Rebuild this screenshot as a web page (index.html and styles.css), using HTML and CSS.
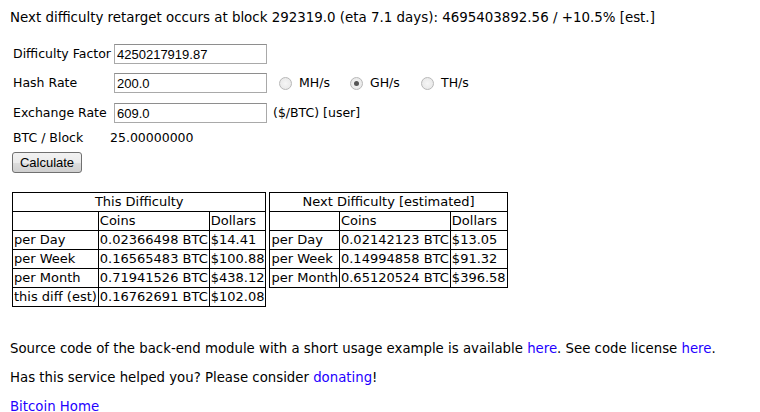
FILE: index.html
```html
<!DOCTYPE html>
<html>
<head>
<meta charset="utf-8">
<link rel="stylesheet" href="styles.css">
</head>
<body>
<p class="retarget">Next difficulty retarget occurs at block 292319.0 (eta 7.1 days): 4695403892.56 / +10.5% [est.]</p>

<form class="calc">
  <div class="row r1">
    <label class="lbl">Difficulty Factor</label>
    <input class="field" type="text" value="4250217919.87">
  </div>
  <div class="row r2">
    <label class="lbl">Hash Rate</label>
    <input class="field" type="text" value="200.0">
    <span class="units">
      <span class="opt"><span class="radio"></span><span class="unit">MH/s</span></span>
      <span class="opt"><span class="radio checked"></span><span class="unit">GH/s</span></span>
      <span class="opt"><span class="radio"></span><span class="unit">TH/s</span></span>
    </span>
  </div>
  <div class="row r3">
    <label class="lbl">Exchange Rate</label>
    <input class="field" type="text" value="609.0">
    <span class="note">($/BTC) [user]</span>
  </div>
  <div class="row r4">
    <span class="lbl">BTC / Block</span>
    <span class="val">25.00000000</span>
  </div>
  <div class="row r5">
    <button class="btn" type="button">Calculate</button>
  </div>
</form>

<div class="results">
  <table class="res">
    <tr><th colspan="3">This Difficulty</th></tr>
    <tr><td></td><td>Coins</td><td>Dollars</td></tr>
    <tr><td>per Day</td><td>0.02366498 BTC</td><td>$14.41</td></tr>
    <tr><td>per Week</td><td>0.16565483 BTC</td><td>$100.88</td></tr>
    <tr><td>per Month</td><td>0.71941526 BTC</td><td>$438.12</td></tr>
    <tr><td>this diff (est)</td><td>0.16762691 BTC</td><td>$102.08</td></tr>
  </table>
  <table class="res">
    <tr><th colspan="3">Next Difficulty [estimated]</th></tr>
    <tr><td></td><td>Coins</td><td>Dollars</td></tr>
    <tr><td>per Day</td><td>0.02142123 BTC</td><td>$13.05</td></tr>
    <tr><td>per Week</td><td>0.14994858 BTC</td><td>$91.32</td></tr>
    <tr><td>per Month</td><td>0.65120524 BTC</td><td>$396.58</td></tr>
  </table>
</div>

<p class="info">Source code of the back-end module with a short usage example is available <a href="#">here</a>. See code license <a href="#">here</a>.</p>
<p class="info">Has this service helped you? Please consider <a href="#">donating</a>!</p>
<p class="info last"><a href="#">Bitcoin Home</a></p>
</body>
</html>
```

FILE: styles.css
```css
html, body {
  background: #fff;
}
body {
  margin: 10px 10px 0;
  font-family: "DejaVu Sans", Verdana, sans-serif;
  font-size: 13px;
  line-height: 16px;
  color: #000;
}
p {
  margin: 13px 0;
}
.retarget {
  margin-top: 0;
  font-size: 13.4px;
}
a {
  color: #2400ff;
  text-decoration: none;
}
.calc {
  display: flex;
  flex-direction: column;
  align-items: flex-start;
  padding-left: 3px;
  margin-top: 18px;
  font-size: 12.5px;
}
.row {
  display: flex;
  align-items: center;
}
.r2 { margin-top: 9px; }
.r3 { margin-top: 10px; }
.r4 { margin-top: 7px; height: 16px; }
.r5 { margin-top: 6px; }
.lbl {
  width: 101px;
  white-space: nowrap;
}
.field {
  box-sizing: border-box;
  width: 153px;
  height: 20px;
  margin: 0;
  padding: 0 2px;
  border: 1px solid #a9a9a9;
  border-top-color: #8e8e8e;
  font-family: "Liberation Sans", Arial, sans-serif;
  font-size: 13px;
  color: #000;
}
.units {
  display: flex;
  align-items: center;
  padding-left: 12px;
}
.opt {
  display: flex;
  align-items: center;
  width: 71px;
}
.radio {
  box-sizing: border-box;
  width: 13px;
  height: 13px;
  border-radius: 50%;
  border: 1px solid #b8b8b8;
  background: radial-gradient(circle, #f6f6f6 0%, #e4e4e4 100%);
  display: flex;
  align-items: center;
  justify-content: center;
}
.radio.checked::after {
  content: "";
  width: 5px;
  height: 5px;
  border-radius: 50%;
  background: #555;
}
.unit {
  margin-left: 7px;
}
.note {
  padding-left: 6px;
}
.val {
  margin-left: -4px;
}
.btn {
  box-sizing: border-box;
  width: 70px;
  height: 21px;
  margin-left: -1px;
  padding: 0;
  border: 1px solid #707070;
  border-radius: 3px;
  background: linear-gradient(#f2f2f2 0%, #ebebeb 50%, #dddddd 51%, #cfcfcf 100%);
  font-family: "Liberation Sans", Arial, sans-serif;
  font-size: 13px;
  color: #000;
}
.results {
  display: flex;
  align-items: flex-start;
  gap: 3px;
  margin-top: 19px;
  margin-left: 2px;
  margin-bottom: 34px;
}
.res {
  border-collapse: collapse;
  font-size: 13px;
  line-height: 16px;
}
.res th, .res td {
  border: 1px solid #000;
  padding: 1px;
  height: 16px;
  white-space: nowrap;
  text-align: left;
}
.res th {
  font-weight: normal;
  text-align: center;
}
.info {
  margin: 0 0 13px;
  font-size: 13.3px;
}
.info.last {
  margin-bottom: 0;
}
```
